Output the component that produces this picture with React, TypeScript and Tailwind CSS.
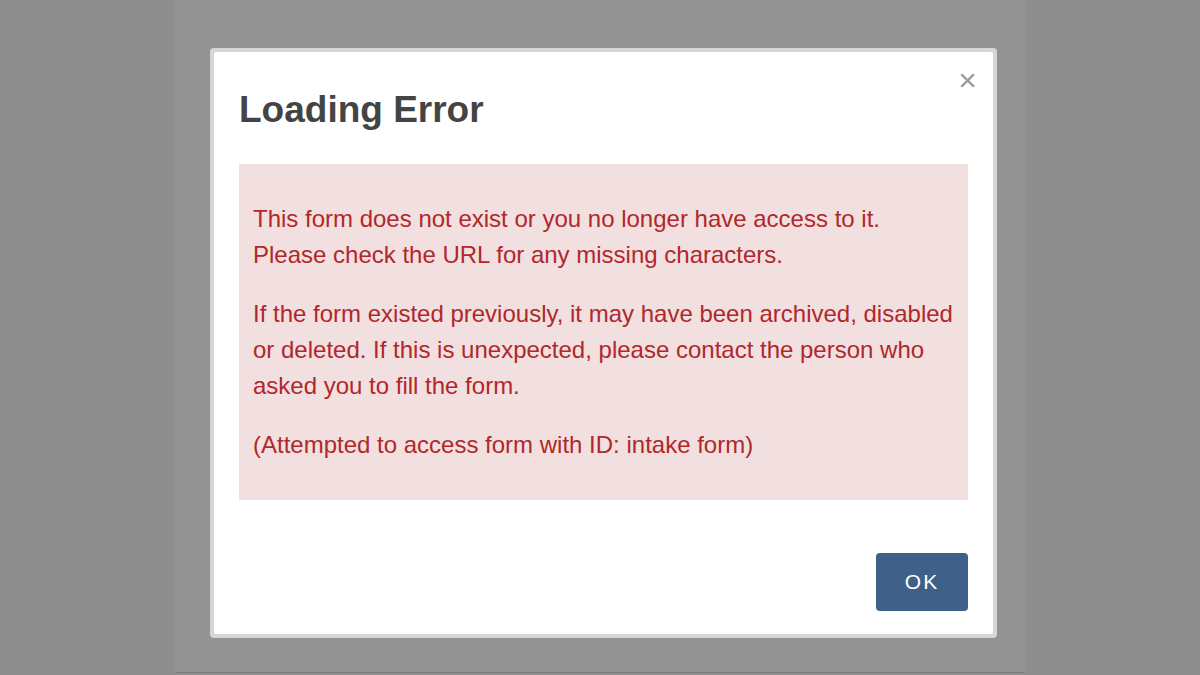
import React from "react";

export default function App() {
  return (
    <div
      className="w-[1200px] h-[675px] bg-[#8f8e8e] flex justify-center overflow-hidden"
      style={{ fontFamily: '"Liberation Sans", Arial, sans-serif' }}
    >
      <div className="w-[850px] h-[673px] bg-[#939393] border-b border-[#7d7d7d] flex justify-center pt-[48px] pl-[7px]">
        <div className="w-[787px] h-[590px] rounded-[4px] bg-[#d6d6d6] p-[4px]">
          <div className="relative h-full bg-white rounded-[2px] px-[25px] pt-[36px] flex flex-col">
            <button className="absolute right-[16px] top-[12px] text-[#9a9a9a] text-[32px] leading-[32px] font-normal">
              ×
            </button>
            <h1 className="text-[37px] leading-[44px] font-bold text-[#444444]">
              Loading Error
            </h1>
            <div className="mt-[32px] bg-[#f2dfdf] px-[14px] py-[37px] text-[#b0282c] text-[24px] leading-[36px]">
              <p>
                This form does not exist or you no longer have access to it.
                <br />
                Please check the URL for any missing characters.
              </p>
              <p className="mt-[23px]">
                If the form existed previously, it may have been archived, disabled
                <br />
                or deleted. If this is unexpected, please contact the person who
                <br />
                asked you to fill the form.
              </p>
              <p className="mt-[23px]">(Attempted to access form with ID: intake form)</p>
            </div>
            <div className="flex justify-end mt-[53px]">
              <button className="w-[92px] h-[58px] rounded-[4px] bg-[#3e6089] text-white text-[21px] tracking-[2px] flex items-center justify-center">
                OK
              </button>
            </div>
          </div>
        </div>
      </div>
    </div>
  );
}
